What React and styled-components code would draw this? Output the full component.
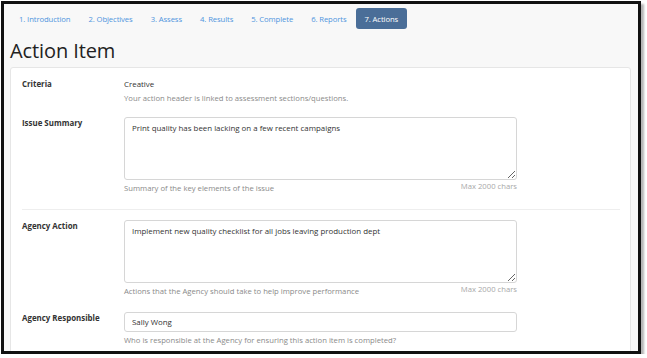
import React from "react";
import styled, { createGlobalStyle } from "styled-components";

const GlobalStyle = createGlobalStyle`
  html, body {
    margin: 0;
    padding: 0;
    background: #fff;
  }
  body {
    font-family: "Open Sans", "Liberation Sans", sans-serif;
  }
`;

const tabs = [
   "1. Introduction",
   "2. Objectives",
   "3. Assess",
   "4. Results",
   "5. Complete",
   "6. Reports",
   "7. Actions",
];

const App = () => {
   return (
      <>
         <GlobalStyle />
         <Frame>
            <Tabs>
               {tabs.map((t, i) => (
                  <Tab key={t} $active={i === tabs.length - 1}>
                     {t}
                  </Tab>
               ))}
            </Tabs>
            <Heading>Action Item</Heading>
            <Card>
               <Row>
                  <Label>Criteria</Label>
                  <Field>
                     <Value>Creative</Value>
                     <Help>Your action header is linked to assessment sections/questions.</Help>
                  </Field>
               </Row>
               <Row>
                  <Label>Issue Summary</Label>
                  <Field>
                     <TextArea defaultValue="Print quality has been lacking on a few recent campaigns" />
                     <HelpRow>
                        <Help>Summary of the key elements of the issue</Help>
                        <Max>Max 2000 chars</Max>
                     </HelpRow>
                  </Field>
               </Row>
               <Divider />
               <Row>
                  <Label>Agency Action</Label>
                  <Field>
                     <TextArea defaultValue="Implement new quality checklist for all jobs leaving production dept" />
                     <HelpRow>
                        <Help>Actions that the Agency should take to help improve performance</Help>
                        <Max>Max 2000 chars</Max>
                     </HelpRow>
                  </Field>
               </Row>
               <Row>
                  <Label>Agency Responsible</Label>
                  <Field>
                     <Input defaultValue="Sally Wong" />
                     <Help>Who is responsible at the Agency for ensuring this action item is completed?</Help>
                  </Field>
               </Row>
            </Card>
         </Frame>
      </>
   );
};

const Frame = styled.div`
   box-sizing: border-box;
   margin: 1px 0 0 1px;
   width: 640px;
   height: 353px;
   border: 3px solid #111;
   background: #f8f8f8;
   box-shadow: 3px 3px 2px #b5b5b5;
   padding: 4px 7px 0 6px;
   overflow: hidden;
`;

const Tabs = styled.nav`
   display: flex;
   height: 21px;
`;

const Tab = styled.a`
   display: flex;
   align-items: center;
   padding: 0 9px;
   font-size: 7.7px;
   letter-spacing: -0.1px;
   color: ${(p) => (p.$active ? "#fff" : "#4f95de")};
   background: ${(p) => (p.$active ? "#4a6e98" : "transparent")};
   border-radius: 3px;
`;

const Heading = styled.h1`
   margin: 9px 0 0;
   font-size: 20px;
   font-weight: 400;
   line-height: 26px;
   letter-spacing: -0.1px;
   color: #222;
   height: 29px;
`;

const Card = styled.section`
   background: #fff;
   border: 1px solid #e6e6e6;
   border-radius: 3px;
   padding: 10px 10px 0 11px;
`;

const Row = styled.div`
   display: grid;
   grid-template-columns: 102px 393px;
   padding: 0 0 12px;
`;

const Label = styled.div`
   font-size: 7.9px;
   font-weight: 700;
   line-height: 12px;
   color: #333;
`;

const Field = styled.div`
   display: flex;
   flex-direction: column;
`;

const Value = styled.div`
   font-size: 7.9px;
   color: #333;
   line-height: 12px;
`;

const Help = styled.div`
   font-size: 7.7px;
   color: #8a8a8a;
   line-height: 13px;
   margin-top: 2px;
`;

const HelpRow = styled.div`
   display: flex;
   justify-content: space-between;
   align-items: flex-start;
   height: 17px;
`;

const Max = styled.div`
   font-size: 7.7px;
   color: #a8a8a8;
   line-height: 13px;
`;

const TextArea = styled.textarea`
   box-sizing: border-box;
   width: 393px;
   height: 63px;
   border: 1px solid #d6d6d6;
   border-radius: 3px;
   padding: 4px 7px;
   font-family: "Open Sans", "Liberation Sans", sans-serif;
   font-size: 7.9px;
   line-height: 12px;
   color: #333;
   resize: vertical;
   margin: 0;
   display: block;
`;

const Input = styled.input`
   box-sizing: border-box;
   width: 393px;
   height: 20px;
   border: 1px solid #d6d6d6;
   border-radius: 3px;
   padding: 0 7px;
   font-family: "Open Sans", "Liberation Sans", sans-serif;
   font-size: 7.9px;
   color: #333;
   margin: 0;
`;

const Divider = styled.hr`
   border: 0;
   border-top: 1px solid #eee;
   margin: 0 0 10px;
`;

export default App;
